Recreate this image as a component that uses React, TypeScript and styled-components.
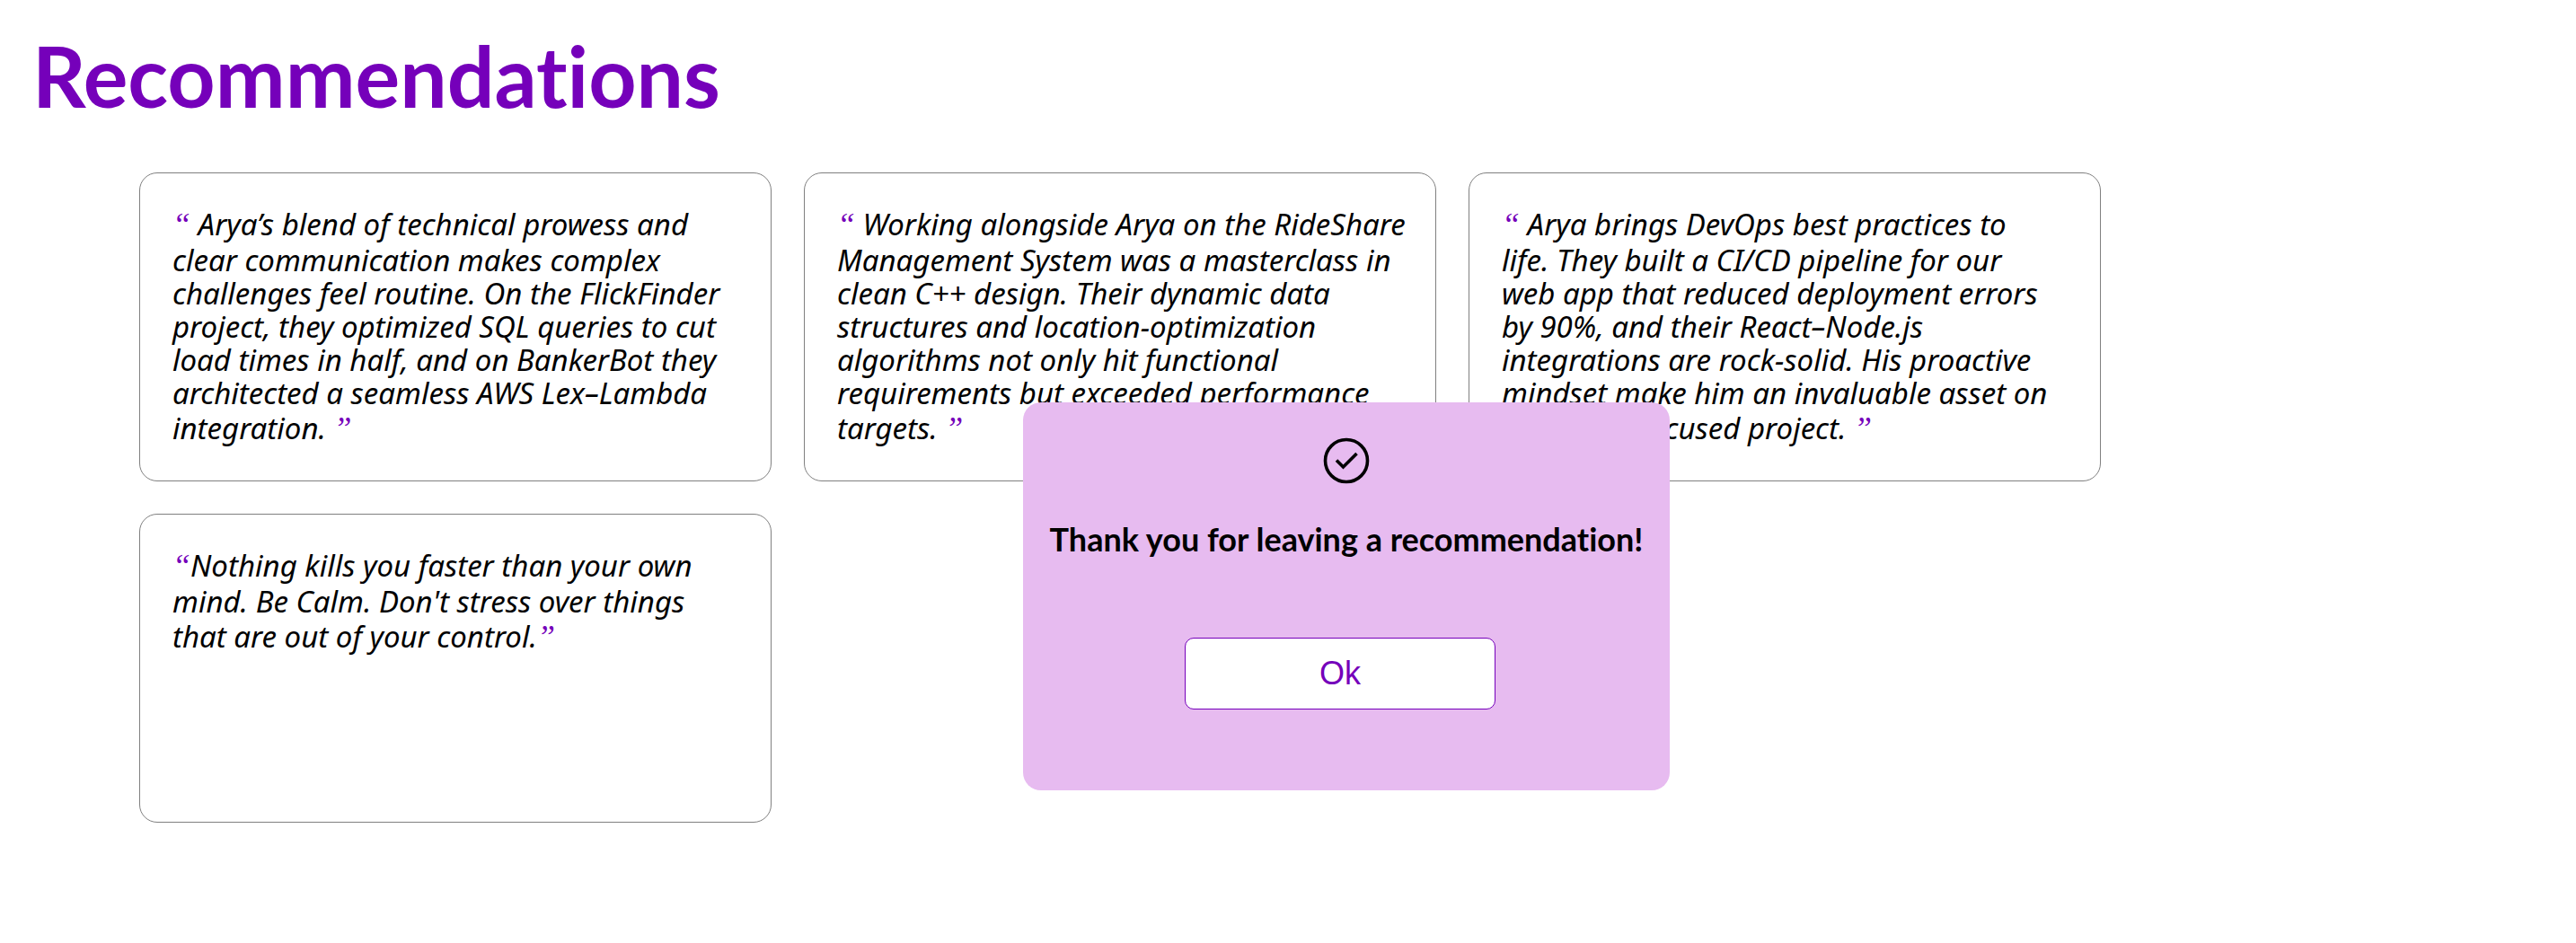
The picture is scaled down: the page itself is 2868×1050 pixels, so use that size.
import React, { useState } from "react";
import styled, { createGlobalStyle } from "styled-components";

const GlobalStyle = createGlobalStyle`
  body {
    margin: 0;
    background: #ffffff;
    color: #000000;
    font-family: "Noto Sans", "Open Sans", sans-serif;
  }
`;

const Page = styled.main`
  display: flex;
  flex-direction: column;
  gap: 46px;
  padding: 22px 0 36px;
`;

const Title = styled.h1`
  margin: 0;
  padding: 0 36px;
  color: #7500ba;
  font-family: Lato, sans-serif;
  font-size: 93px;
  font-variant-ligatures: none;
  font-weight: 700;
  line-height: 124px;
`;

const Cards = styled.section`
  display: grid;
  grid-template-columns: repeat(auto-fit, 704px);
  grid-auto-rows: minmax(344px, auto);
  gap: 36px;
  max-width: 2560px;
  padding: 0 36px 0 155px;
`;

const Card = styled.blockquote`
  box-sizing: border-box;
  margin: 0;
  padding: 36px 24px 36px 36px;
  border: 1px solid #808080;
  border-radius: 20px;
  font-size: 33px;
  font-style: italic;
  line-height: 37px;
  white-space: pre-line;
`;

const Mark = styled.span`
  color: #7500ba;
  font-family: "Liberation Serif", serif;
  font-size: 36px;
  line-height: 42px;
`;

const Popup = styled.div`
  position: fixed;
  top: 448px;
  left: calc(50% + 65px);
  transform: translateX(-50%);
  box-sizing: border-box;
  display: flex;
  flex-direction: column;
  align-items: center;
  width: 720px;
  min-height: 432px;
  padding: 36px 0;
  border-radius: 20px;
  background: #e7bbf0;
`;

const CheckIcon = styled.svg`
  width: 60px;
  height: 60px;
`;

const Message = styled.h3`
  margin: 36px 0 0;
  font-family: Lato, sans-serif;
  font-size: 36px;
  font-variant-ligatures: none;
  font-weight: 700;
  line-height: 40px;
  white-space: nowrap;
`;

const OkButton = styled.button`
  width: 346px;
  height: 80px;
  margin: 90px 14px 0 0;
  border: 1px solid #7500ba;
  border-radius: 10px;
  background: #ffffff;
  color: #7500ba;
  font-family: "Liberation Sans", Arial, sans-serif;
  font-size: 36px;
  cursor: pointer;
`;

const recommendations = [
  "\u00a0Arya’s blend of technical prowess and\nclear communication makes complex\nchallenges feel routine. On the FlickFinder\nproject, they optimized SQL queries to cut\nload times in half, and on BankerBot they\narchitected a seamless AWS Lex–Lambda\nintegration.\u00a0",
  "\u00a0Working alongside Arya on the RideShare\nManagement System was a masterclass in\nclean C++ design. Their dynamic data\nstructures and location-optimization\nalgorithms not only hit functional\nrequirements but exceeded performance\ntargets.\u00a0",
  "\u00a0Arya brings DevOps best practices to\nlife. They built a CI/CD pipeline for our\nweb app that reduced deployment errors\nby 90%, and their React–Node.js\nintegrations are rock-solid. His proactive\nmindset make him an invaluable asset on\nany cloud-focused project.\u00a0",
  "Nothing kills you faster than your own\nmind. Be Calm. Don't stress over things\nthat are out of your control.",
];

export default function App() {
  const [open, setOpen] = useState(true);
  return (
    <>
      <GlobalStyle />
      <Page>
        <Title>Recommendations</Title>
        <Cards>
          {recommendations.map((text) => (
            <Card key={text}>
              <Mark>“</Mark>
              {text}
              <Mark>”</Mark>
            </Card>
          ))}
        </Cards>
      </Page>
      {open && (
        <Popup role="dialog" aria-labelledby="popup-message">
          <CheckIcon viewBox="0 0 60 60" fill="none" stroke="#000000" aria-hidden="true">
            <circle cx="30" cy="29" r="23.5" strokeWidth="3.6" />
            <path d="M19 28.5 L26.5 36 L41.5 21" strokeWidth="3.6" />
          </CheckIcon>
          <Message id="popup-message">Thank you for leaving a recommendation!</Message>
          <OkButton type="button" onClick={() => setOpen(false)}>
            Ok
          </OkButton>
        </Popup>
      )}
    </>
  );
}
